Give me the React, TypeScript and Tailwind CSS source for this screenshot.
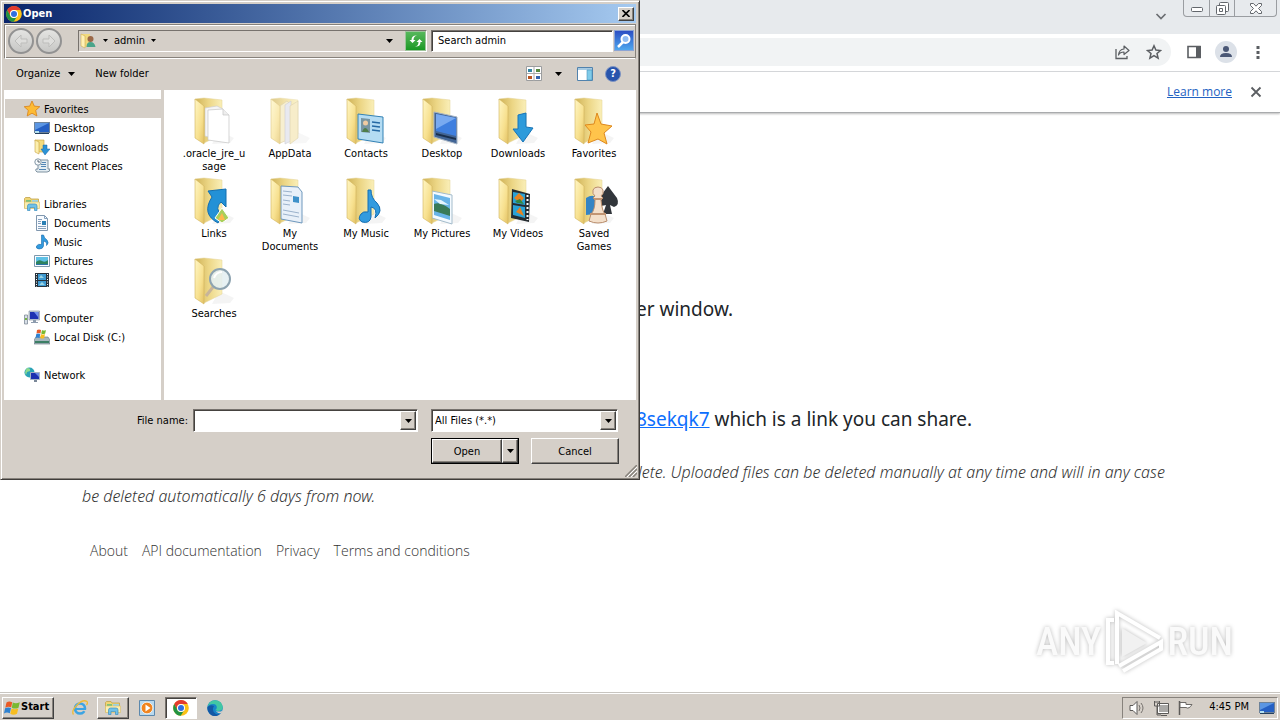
import type { ReactNode } from "react"

const raised = "border border-t-white border-l-white border-r-[#404040] border-b-[#404040] shadow-[inset_-1px_-1px_0_#87827c] bg-[#d5cfc8]"
const sunken = "border border-t-[#77726d] border-l-[#77726d] border-r-white border-b-white shadow-[inset_1px_1px_0_#45423f]"

function Svg({ size = 16, children }: { size?: number; children: ReactNode }) {
  return (
    <svg width={size} height={size} viewBox={`0 0 ${size} ${size}`} className="shrink-0" aria-hidden="true">
      {children}
    </svg>
  )
}

function Arrow() {
  return (
    <svg width="7" height="4" viewBox="0 0 7 4" className="shrink-0" aria-hidden="true">
      <path d="M0 0h7L3.5 4z" fill="#000" />
    </svg>
  )
}

function SmallArrow() {
  return (
    <svg width="5" height="3" viewBox="0 0 5 3" className="shrink-0" aria-hidden="true">
      <path d="M0 0h5L2.5 3z" fill="#000" />
    </svg>
  )
}

function ChromeLogo() {
  return (
    <Svg>
      <circle cx="8" cy="8" r="7.8" fill="#fbc116" />
      <path d="M1.2 4.1A7.8 7.8 0 0 1 14.8 4.1H8A4 4 0 0 0 4.5 10z" fill="#e33b2e" />
      <path d="M1.2 4.1A7.8 7.8 0 0 0 7.7 15.8L11.4 10A4 4 0 0 1 4.5 10z" fill="#229342" />
      <circle cx="8" cy="8" r="4" fill="#fff" />
      <circle cx="8" cy="8" r="3" fill="#2f6fe0" />
    </Svg>
  )
}

function WindowsFlag() {
  return (
    <Svg>
      <path d="M2.5 2.6Q5 .8 8.200 2.3L7.200 7.300Q4.300 6 1.3 7.7z" fill="#ea5a25" />
      <path d="M8.800 2.600Q12 4.200 15.800 2.2L14.500 7.700Q11 9.400 7.800 7.700z" fill="#79b931" />
      <path d="M1.1 8.300Q4 6.700 7 8L5.800 13.200Q2.800 11.600 0 13.400z" fill="#2f82d1" />
      <path d="M7.600 8.400Q10.800 10 14.300 8.400L13 13.800Q9.400 15.600 6.300 13.700z" fill="#f7bd20" />
    </Svg>
  )
}

function MonitorArt() {
  return (
    <>
      <rect x=".5" y="2.5" width="15" height="10" fill="#2560c4" stroke="#6d8299" />
      <path d="M1 3h14L1 10z" fill="#5b96e3" />
      <path d="M1 13h14v1H1z" fill="#24405f" />
      <path d="M1 11h4v2H1z" fill="#b3e0f0" />
    </>
  )
}

function LibraryArt() {
  return (
    <>
      <path d="M.5 2.500l1-1H6l1 1.500h7.500V12H.5z" fill="#efd573" stroke="#c2a24a" strokeWidth=".8" />
      <path d="M2 4h5v3H2z" fill="#7fc27a" />
      <path d="M8 4h6v3H8z" fill="#9bd3e6" />
      <path d="M.5 6h15v6.500H.5z" fill="#fbeeb0" stroke="#d6bd69" strokeWidth=".6" />
      <path d="M3.500 14.500V10q0-2 2-2h5.500q2 0 2 2v4.500h-2.500V11.500H6v3z" fill="#6fc1e8" stroke="#3c8fc0" strokeWidth=".7" />
    </>
  )
}

const note = "M7.5 1L9.5 1Q10 4 13 6Q15.5 9 12.5 11.5Q13.5 8 9.5 7V12Q9 15 5 15Q1.5 14.5 2.5 12Q4 9.5 7.5 10.5z"

const treeArt: Record<string, ReactNode> = {
  Favorites: <path d="M8 0l2.3 5.1 5.5.6-4.1 3.7 1.2 5.6L8 12.2 3.2 15l1.1-5.6L.2 5.7l5.5-.6z" fill="#fdbb35" stroke="#d8811a" strokeWidth=".8" />,
  Desktop: <MonitorArt />,
  Downloads: (
    <>
      <path d="M1 1h9v12H4z" fill="#f4dc7e" stroke="#c7a140" strokeWidth=".6" />
      <path d="M1 1l4 2v12l-4-2z" fill="#fcefae" stroke="#c7a140" strokeWidth=".6" />
      <path d="M9 6h4v4h3l-5 6-4-6h2z" fill="#2b93d6" stroke="#1b65a7" strokeWidth=".5" />
    </>
  ),
  "Recent Places": (
    <>
      <path d="M4 2h10v9h2q0 3-3 3H3q-2-1-1-3h2z" fill="#e4edf2" stroke="#7f91a0" />
      <path d="M8 4.5h4M7 6.5h5M7 8.5h5M5 11.5h7" stroke="#5386b4" />
      <circle cx="4" cy="4" r="3.2" fill="#f7fafc" stroke="#8296a5" />
      <path d="M4 2v2h2" fill="none" stroke="#345" strokeWidth=".8" />
    </>
  ),
  Libraries: <LibraryArt />,
  Documents: (
    <>
      <path d="M2.5.5h8l3 3v12h-11z" fill="#f8fbff" stroke="#8097ae" />
      <path d="M10.5.5v3h3M4 4.5h4M4 6.5h3M4 8.5h3M4 11.5h8M4 13.5h8" fill="none" stroke="#85a0bd" />
      <path d="M8 6h4v4H8z" fill="#297fb5" />
    </>
  ),
  Music: <path d={note} fill="#329bdf" stroke="#1969aa" strokeWidth=".6" />,
  Pictures: (
    <>
      <path d="M.5 2.5h15v11H.5z" fill="#fafcff" stroke="#7d98ad" />
      <path d="M2 4h12v8H2z" fill="#5ec1e6" />
      <path d="M2 9q3-3 6-1t6-1v5H2z" fill="#2e8360" />
      <path d="M2 11h12v1H2z" fill="#2c73a8" />
    </>
  ),
  Videos: (
    <>
      <path d="M1 1h14v14H1z" fill="#27333d" />
      <path d="M4 2h8v6H4zM4 9h8v5H4z" fill="#3f9bd3" />
      <path d="M5 6l2-3 3 3zM5 13l3-3 3 3z" fill="#9bd6e5" />
      <path d="M2.5 2v13M13.5 2v13" stroke="#fff" strokeDasharray="1 1.5" />
    </>
  ),
  Computer: (
    <>
      <path d="M5 1h10.5v9H5z" fill="#c5d1df" stroke="#7a8798" strokeWidth=".6" />
      <path d="M6 2h8.5v7H6z" fill="#1e31b2" />
      <path d="M10 2h4v5z" fill="#7290ec" />
      <path d="M9 10h3v2h2v1H7v-1h2z" fill="#8e9cae" />
      <path d="M.5 5h3v9h-3z" fill="#d8dfe7" stroke="#72808e" strokeWidth=".7" />
      <path d="M1 8h2v2H1z" fill="#75b445" />
    </>
  ),
  "Local Disk (C:)": (
    <>
      <path d="M0 11l2-3h12l2 3v4H0z" fill="#a6b6bd" stroke="#62737e" strokeWidth=".6" />
      <path d="M1 12h14v2H1z" fill="#3c7f65" />
      <path d="M3 1q2-1 4 0L6.5 4.5q-2-1-4 0z" fill="#e85c28" />
      <path d="M8 1q2 1 4 0l-.8 3.500q-2 1-4 0z" fill="#79b931" />
      <path d="M2.3 5q2-1 4 0L5.5 9q-2-1-4 0z" fill="#2f82d1" />
      <path d="M7 5q2 1 4 0l-.8 4q-2 1-4 0z" fill="#f7bd20" />
    </>
  ),
  Network: (
    <>
      <circle cx="5.5" cy="5.5" r="5" fill="#2aa3b7" />
      <path d="M3 1q4 0 3 3L3 5l-1 3Q0 5 3 1z" fill="#8ddb8e" />
      <path d="M6.5 5.5h9v7h-9z" fill="#1c2fb0" stroke="#a6b2c4" />
      <path d="M11 6h4v4z" fill="#6c87e4" />
      <path d="M10 13h3v2h-3z" fill="#7b8899" />
    </>
  ),
}

const treeGroups = [
  { name: "Favorites", items: ["Desktop", "Downloads", "Recent Places"] },
  { name: "Libraries", items: ["Documents", "Music", "Pictures", "Videos"] },
  { name: "Computer", items: ["Local Disk (C:)"] },
  { name: "Network", items: [] },
]

const folders: { label: string; art: ReactNode }[] = [
  {
    label: ".oracle_jre_usage",
    art: (
      <>
        <path d="M15 12l12-2 6 3v31l-8-1-10-3z" fill="#f5f5f5" stroke="#cfcfcf" strokeWidth=".7" />
        <path d="M18 14l15-1 6 6v28l-21-3z" fill="#fff" stroke="#c4c4c4" strokeWidth=".7" />
        <path d="M33 13v6h6" fill="#eee" stroke="#c4c4c4" strokeWidth=".7" />
      </>
    ),
  },
  {
    label: "AppData",
    art: (
      <>
        <path d="M14 10l7-5 3 3v35l-10 4z" fill="#f5e9bd" stroke="#cfc08e" strokeWidth=".6" />
        <path d="M19 9l6-4v40l-6 3z" fill="#dfe1ea" stroke="#b9b9c4" strokeWidth=".6" />
        <path d="M24 10l8-5v37l-8 6z" fill="#f4e6b4" stroke="#cfc08e" strokeWidth=".6" />
      </>
    ),
  },
  {
    label: "Contacts",
    art: (
      <>
        <path d="M16 18l25 3v26l-25-4z" fill="#b4dcf3" stroke="#3382b5" />
        <path d="M19 22l9 1v14l-9-1z" fill="#7795a2" />
        <circle cx="23.5" cy="27" r="2.5" fill="#f1cba2" />
        <path d="M20 36q3-8 7 0z" fill="#4f7d4a" />
        <path d="M30 26l8 1M30 30l8 1M30 34l8 1" stroke="#2569a4" strokeWidth="1.5" />
      </>
    ),
  },
  {
    label: "Desktop",
    art: (
      <>
        <path d="M16 16l23 5v27l-23-7z" fill="#426596" stroke="#a4b3c4" />
        <path d="M18 18l20 4v18l-20-5z" fill="#3f7fdf" />
        <path d="M18 18l20 4-20 11z" fill="#79aaf0" />
        <path d="M18 37l20 5v2l-20-5z" fill="#192f4d" />
      </>
    ),
  },
  { label: "Downloads", art: <path d="M24 19l8-2v14l7 1-10 14-10-13h5z" fill="#2d9bdb" stroke="#1874b7" /> },
  { label: "Favorites", art: <path d="M27 17l4 11 11 2-8 7 3 11-9-5-10 4 3-11-6-7 9-1z" fill="#ffc44b" stroke="#de881d" /> },
  {
    label: "Links",
    art: (
      <>
        <path d="M18 15l18-2v18l-5-5q-7 6 1 14l-4 7q-17-9-6-26z" fill="#2391d6" stroke="#146eaf" />
        <path d="M25 42l7-10 7 10-7 5z" fill="#a9cf5b" stroke="#fff" />
        <path d="M28 44l4-7 3 7z" fill="#ffb74e" />
      </>
    ),
  },
  {
    label: "My Documents",
    art: (
      <>
        <path d="M15 10l17 1 4 5v31l-21-4z" fill="#e8f0f9" stroke="#6e98bd" />
        <path d="M17 15l9 1M17 19l9 1M17 24l7 1M17 28l7 1M17 34l16 3M17 38l16 3" stroke="#9bb2cc" />
        <path d="M27 20l6 1v6l-6-1z" fill="#3f91c9" />
      </>
    ),
  },
  { label: "My Music", art: <path d="M26 14h3q0 8 6 13 7 8-2 15 3-10-4-11v10q-1 7-9 5-5-3-1-8 2-3 7-2z" fill="#329bdf" stroke="#146eb1" /> },
  {
    label: "My Pictures",
    art: (
      <>
        <path d="M14 15l20 4v29l-20-6z" fill="#f4faff" stroke="#a4bccb" />
        <path d="M16 18l16 4v22l-16-5z" fill="#69b4e8" />
        <path d="M16 28q6-3 16 5v7l-16-5z" fill="#397a58" />
        <path d="M16 23l7 1 8 5-9-1z" fill="#e4f5ff" />
      </>
    ),
  },
  {
    label: "My Videos",
    art: (
      <>
        <path d="M18 13l18 5-1 28-18-4z" fill="#252c30" />
        <path d="M19 16l12 2v11l-12-2zM19 29l12 2v11l-12-3z" fill="#2aa2d5" />
        <path d="M20 22l5-5 5 5-4 5zM22 36l4-5 4 9z" fill="#e7831f" />
        <path d="M21 25l5-2 4 5-7-1z" fill="#358543" />
        <path d="M33.5 19v25" stroke="#fff" strokeWidth="2" strokeDasharray="2 2" />
      </>
    ),
  },
  {
    label: "Saved Games",
    art: (
      <>
        <path d="M16 22q8-5 10 1l-1 15-9 1z" fill="#3484c4" />
        <path d="M38 10Q44 18 47 22Q50 29 44 31L40 29 42 38H33L36 29Q27 32 28 24Q32 18 38 10z" fill="#32363b" />
        <path d="M25 20q-3-2-2-6 1-3 5-3t5 3q1 4-2 6l2 2-2 2q1 11 4 14l2 7q-9 4-18 0l2-7q4-4 4-14l-2-2z" fill="#f3dfca" stroke="#b98d6c" />
        <path d="M20 38h16M24 23h8" stroke="#c29573" strokeWidth="2" />
      </>
    ),
  },
  {
    label: "Searches",
    art: (
      <>
        <path d="M23 31l-7 9" stroke="#c7b49a" strokeWidth="3" />
        <circle cx="30" cy="23" r="10" fill="#e4eff1" fillOpacity=".88" stroke="#8da3b0" strokeWidth="2" />
        <path d="M24 22q2-6 8-6" fill="none" stroke="#fff" strokeWidth="2" />
      </>
    ),
  },
]

function FolderIcon({ faded, children }: { faded: boolean; children: ReactNode }) {
  return (
    <svg width="48" height="48" viewBox="0 0 48 48" className="overflow-visible" opacity={faded ? 0.7 : 1} aria-hidden="true">
      <defs>
        <linearGradient id="flap" x1="0" y1="0" x2="1" y2="1">
          <stop stopColor="#fff6c4" />
          <stop offset=".6" stopColor="#f7e08e" />
          <stop offset="1" stopColor="#e2c163" />
        </linearGradient>
        <linearGradient id="back" x1="0" y1="0" x2="1" y2="0">
          <stop stopColor="#cfb257" />
          <stop offset=".5" stopColor="#ecd685" />
          <stop offset="1" stopColor="#faefb8" />
        </linearGradient>
      </defs>
      <path d="M29 35l15 7-4 5-18 1z" fill="#777" opacity=".08" />
      <path d="M5 3l9-1 18 2v34l-18 9z" fill="url(#back)" stroke="#e3d193" strokeWidth=".5" />
      {children}
      <path d="M5 3l9 7v38l-9-6z" fill="url(#flap)" stroke="#d2b45c" strokeWidth=".6" />
    </svg>
  )
}

function OpenDialog() {
  return (
    <section
      aria-label="Open"
      className="absolute top-0 left-0 z-10 w-[640px] border border-t-[#d5cfc8] border-l-[#d5cfc8] border-r-[#403d3a] border-b-[#403d3a] bg-[#d5cfc8] p-[3px] text-[11px] leading-[13px] text-black shadow-[inset_1px_1px_0_#fff,inset_-1px_-1px_0_#87827c]"
    >
      <header className="flex h-[19px] items-center gap-px bg-linear-to-r from-[#0a246a] to-[#a6caf0] px-0.5">
        <ChromeLogo />
        <h1 className="flex-1 font-bold text-white">Open</h1>
        <button aria-label="Close" className={`flex h-[14px] w-4 items-center justify-center ${raised}`}>
          <svg width="8" height="7" viewBox="0 0 8 7"><path d="M.5 0l7 7M7.5 0l-7 7" stroke="#000" strokeWidth="1.600" /></svg>
        </button>
      </header>

      {/* Address row */}
      <div className="mt-px flex h-[35px] items-center border border-[#87827c] border-b-white pr-px pb-0.5 pl-[3px] shadow-[inset_1px_1px_0_#fff,inset_0_-1px_0_#87827c]">
        {["Back", "Forward"].map((name) => (
          <button key={name} aria-label={name} className="mr-0.5 flex size-[26px] items-center justify-center rounded-full border-2 border-[#929292] bg-linear-to-b from-[#e4e4e2] to-[#c7c7c5]">
            <svg width="16" height="14" viewBox="0 0 16 14">
              <path d={name === "Back" ? "M8 1L2 7l6 6v-4h6V5H8z" : "M8 1l6 6-6 6V9H2V5h6z"} fill="#dededc" stroke="#bdbdbb" />
            </svg>
          </button>
        ))}
        <div className="ml-3.5 flex h-[22px] flex-1 items-center border border-t-[#77726d] border-l-[#77726d] border-r-white border-b-white pl-px">
          <Svg>
            <path d="M1 1h9v13H4z" fill="#f1d97e" />
            <path d="M1 1l4 2v12l-4-2z" fill="#fff1b5" stroke="#c7a140" strokeWidth=".5" />
            <circle cx="10.5" cy="6" r="3" fill="#9b6848" />
            <path d="M6.5 14q0-5 4-5t5 5z" fill="#4aa58a" />
          </Svg>
          <span className="ml-[7px]"><SmallArrow /></span>
          <span className="ml-1.5">admin</span>
          <span className="ml-1.5"><SmallArrow /></span>
          <button aria-label="Previous locations" className="mr-3 ml-auto"><Arrow /></button>
          <button aria-label="Refresh" className="flex h-5 w-[21px] items-center justify-center border border-[#9cc49a] bg-linear-to-b from-[#55b85b] to-[#179923]">
            <Svg>
              <path d="M9 2.500Q5.500 3 5.500 7H7.500L4.500 10 1.500 7h2q0-5 5.500-4.500z" fill="#fff" />
              <path d="M7 13.500q3.500-.5 3.500-4.500h-2l3-3 3 3h-2q0 5-5.500 4.500z" fill="#fff" />
            </Svg>
          </button>
        </div>
        <input aria-label="Search admin" defaultValue="Search admin" className={`ml-1 h-[22px] w-[182px] bg-white pl-1.5 ${sunken}`} />
        <button aria-label="Search" className="ml-px flex h-[21px] w-5 items-center justify-center border border-[#8ca4d4] bg-linear-to-b from-[#2d4ec3] to-[#50a7ee]">
          <Svg>
            <circle cx="9.5" cy="6" r="4" fill="#91bdf3" stroke="#fff" strokeWidth="2" />
            <path d="M7 9l-5 5" stroke="#fff" strokeWidth="2.5" />
          </Svg>
        </button>
      </div>

      {/* Command bar */}
      <div className="flex h-[31px] items-center pr-[15px] pb-0.5 pl-3">
        <button className="flex items-center gap-2">Organize <Arrow /></button>
        <button className="ml-5">New folder</button>
        <button aria-label="Change view" className="ml-auto">
          <Svg>
            <path d="M.5.5h15v14H.5z" fill="#fff" stroke="#9b9d9f" />
            <path d="M8 1v14M1 7.5h14" stroke="#aaa" />
            <path d="M2 3h4v3H2z" fill="#3586a4" />
            <path d="M10 3h4v3h-4z" fill="#568a42" />
            <path d="M2 10h4v3H2z" fill="#ba521f" />
            <path d="M10 10h4v3h-4z" fill="#3061ad" />
          </Svg>
        </button>
        <button aria-label="More views" className="ml-[13px]"><Arrow /></button>
        <button aria-label="Preview pane" className="ml-[15px]">
          <Svg>
            <path d="M.5 1.5h15v13H.5z" fill="#fff" stroke="#5182ad" />
            <path d="M1 2h14v2H1z" fill="#a7cae2" />
            <path d="M10 4h5v10h-5z" fill="#7fcbe9" stroke="#4a94bd" strokeWidth=".6" />
          </Svg>
        </button>
        <button aria-label="Help" className="ml-3 flex size-4 items-center justify-center rounded-full border border-[#7f95c3] bg-[#2854ac] font-bold text-white">?</button>
      </div>

      <div className="flex h-[310px] bg-white">
        <nav className="w-[160px] border-r-[3px] border-[#d5cfc8] pt-[9px] pl-px">
          {treeGroups.map((group) => (
            <ul key={group.name} className="mb-[19px]">
              <li className={`flex h-[19px] items-center gap-1 pt-px pl-[19px] ${group.name === "Favorites" ? "bg-[#d5cfc8]" : ""}`}>
                <Svg>{treeArt[group.name]}</Svg>
                {group.name}
              </li>
              {group.items.map((item) => (
                <li key={item} className="flex h-[19px] items-center gap-1 pt-px pl-[29px]">
                  <Svg>{treeArt[item]}</Svg>
                  {item}
                </li>
              ))}
            </ul>
          ))}
        </nav>
        <ul className="grid flex-1 auto-rows-[80px] grid-cols-[repeat(6,76px)] pt-1.5 pl-3">
          {folders.map((folder) => (
            <li key={folder.label} className="flex flex-col items-center gap-[3px] text-center">
              <FolderIcon faded={folder.label === "AppData"}>{folder.art}</FolderIcon>
              <span className="w-[68px] px-0.5 break-words">{folder.label}</span>
            </li>
          ))}
        </ul>
      </div>

      <form className="flex flex-col gap-1.5 px-[17px] pt-[9px] pb-3" onSubmit={(e) => e.preventDefault()}>
        <div className="flex items-center justify-end pr-px">
          <label htmlFor="file-name" className="mr-[5px]">File name:</label>
          <div className={`flex h-[23px] w-[225px] bg-white p-px ${sunken}`}>
            <input id="file-name" className="min-w-0 flex-1 pl-1 outline-none" />
            <button type="button" aria-label="Recent file names" className={`flex w-4 items-center justify-center ${raised}`}><Arrow /></button>
          </div>
          <div className={`relative ml-[13px] h-[23px] w-[187px] bg-white ${sunken}`}>
            <select aria-label="File type" className="size-full appearance-none pl-[3px]">
              <option>All Files (*.*)</option>
            </select>
            <span className={`pointer-events-none absolute inset-y-px right-px flex w-4 items-center justify-center ${raised}`}><Arrow /></span>
          </div>
        </div>
        <div className="flex justify-end gap-3">
          <div className="flex h-[26px] w-[88px] border border-black">
            <button className={`flex-1 ${raised}`}>Open</button>
            <button type="button" aria-label="Open options" className={`flex w-4 items-center justify-center ${raised}`}><Arrow /></button>
          </div>
          <button type="button" className={`h-[26px] w-[88px] ${raised}`}>Cancel</button>
        </div>
      </form>
      <svg width="12" height="12" viewBox="0 0 12 12" className="absolute right-0.5 bottom-0.5" aria-hidden="true">
        <path d="M0 12L12 0M4 12l8-8M8 12l4-4" stroke="#87827c" strokeWidth="1.500" />
        <path d="M2 12L12 2M6 12l6-6" stroke="#fff" />
      </svg>
    </section>
  )
}

function BrowserChrome() {
  return (
    <header>
      <div className="flex h-[34px] items-start justify-end bg-[#e7eaed] pr-[3px]">
        <button aria-label="Search tabs" className="mt-[13px] mr-4">
          <svg width="12" height="7" viewBox="0 0 12 7"><path d="M1.5 1L6 5.5 10.5 1" fill="none" stroke="#6b6e72" strokeWidth="1.700" /></svg>
        </button>
        <div className="flex h-[17px] rounded-b border border-t-0 border-[#9a9da1]">
          <button aria-label="Minimize" className="flex w-[25px] items-center justify-center pt-0.5">
            <svg width="12" height="6" viewBox="0 0 12 6"><rect x=".5" y="1.5" width="11" height="4" rx="1" fill="#fff" stroke="#63676c" /></svg>
          </button>
          <button aria-label="Restore" className="flex w-[26px] items-center justify-center border-x border-[#9a9da1]">
            <svg width="13" height="13" viewBox="0 0 13 13" fill="#fff" stroke="#63676c"><rect x="3.5" y=".5" width="9" height="9" rx="1" /><rect x=".5" y="3.5" width="9" height="9" rx="1" /><path d="M3.5 6.5h3v3h-3z" /></svg>
          </button>
          <button aria-label="Close window" className="flex w-[41px] items-center justify-center">
            <svg width="12" height="11" viewBox="0 0 12 11"><path d="M.5.5h3L6 3.2 8.5.5h3v2L8.500 5.500l3 3v2h-3L6 7.800 3.500 10.500h-3v-2l3-3-3-3z" fill="#fff" stroke="#63676c" /></svg>
          </button>
        </div>
      </div>
      <div className="flex h-[38px] items-center border-b border-[#d7d9dc] bg-white pr-3.5 pb-px">
        <div className="flex h-[28px] flex-1 items-center justify-end gap-4 rounded-r-full bg-[#f1f3f4] pr-[9px]">
          <button aria-label="Share this page">
            <Svg>
              <path d="M2 5v9.500h11V12" fill="none" stroke="#5b5e62" strokeWidth="1.300" />
              <path d="M10 2l5 4.500-5 4V8Q6 8 4.500 11 5 5.500 10 5z" fill="none" stroke="#5b5e62" strokeWidth="1.200" strokeLinejoin="round" />
            </Svg>
          </button>
          <button aria-label="Bookmark this tab">
            <Svg><path d="M8 1.800l1.900 4.300 4.600.4-3.500 3 1.100 4.600L8 11.700l-4.100 2.400L5 9.500l-3.500-3 4.600-.4z" fill="none" stroke="#5b5e62" strokeWidth="1.500" /></Svg>
          </button>
        </div>
        <button aria-label="Side panel" className="ml-[15px]">
          <Svg><path d="M2 2.500h12v11H2z" fill="none" stroke="#5b5e62" strokeWidth="1.600" /><path d="M10 2h5v12h-5z" fill="#5b5e62" /></Svg>
        </button>
        <button aria-label="Profile" className="ml-[13px] flex size-[22px] items-center justify-center rounded-full bg-[#dce1e8]">
          <Svg><circle cx="8" cy="5" r="3" fill="#4a5775" /><path d="M2 13q0-4 6-4t6 4z" fill="#4a5775" /></Svg>
        </button>
        <button aria-label="Chrome menu" className="ml-[13px]">
          <Svg><path d="M6.500 2h3v3h-3zM6.500 7h3v3h-3zM6.500 12h3v3h-3z" fill="#5b5e62" /></Svg>
        </button>
      </div>
      <div className="flex h-[41px] items-center justify-end border-b border-[#a9abad] bg-white pr-[18px] font-['Open_Sans',sans-serif] text-xs shadow-[0_1px_2px_#bbb]">
        <a href="#" className="text-[#2262c2] underline">Learn more</a>
        <button aria-label="Dismiss" className="ml-[18px]">
          <svg width="12" height="12" viewBox="0 0 12 12"><path d="M1.5 1.5l9 9M10.5 1.5l-9 9" stroke="#5b5e62" strokeWidth="1.800" /></svg>
        </button>
      </div>
    </header>
  )
}

function Page() {
  return (
    <main className="flex-1 px-[82px] pt-[181px] font-['Noto_Sans',sans-serif] text-[#212529]">
      <div className="pl-[554px] text-[19px] leading-[30px] whitespace-nowrap">
        <p>er window.</p>
        <p className="mt-20"><a href="#" className="text-[#0d6efd] underline">8sekqk7</a> which is a link you can share.</p>
      </div>
      <p className="mt-[26px] text-base leading-6 font-light whitespace-nowrap text-[#333] italic">
        <span className="block pl-[556px]">lete. Uploaded files can be deleted manually at any time and will in any case</span>
        be deleted automatically 6 days from now.
      </p>
      <footer className="mt-[31px] flex gap-3.5 pl-2 font-['Open_Sans',sans-serif] text-sm leading-6 font-light text-[#333]">
        <a href="#">About</a>
        <a href="#">API documentation</a>
        <a href="#">Privacy</a>
        <a href="#">Terms and conditions</a>
      </footer>
    </main>
  )
}

function Watermark() {
  return (
    <div className="pointer-events-none absolute right-[47px] bottom-[46px] flex items-center gap-1 font-['Roboto_Condensed','Liberation_Sans_Narrow',sans-serif] text-[38px] leading-none font-medium text-[#fafafa] drop-shadow-[0_0_2px_#bbb]">
      <span>ANY</span>
      <svg width="58" height="64" viewBox="0 0 58 64" aria-hidden="true">
        <path d="M17 18v29l25-14z" fill="#f1f1f1" />
        <path d="M9 53H3V10h6M12 47V3l43 25M12 3v51M18 61l38-22v-7L14 56" fill="none" stroke="#fff" strokeWidth="4" />
      </svg>
      <span>RUN</span>
    </div>
  )
}

function Taskbar() {
  return (
    <footer className="relative flex h-7 items-center border-t border-[#c8c5c0] bg-[#d5cfc8] px-0.5 pt-0.5 text-[11px] text-black shadow-[inset_0_1px_0_#fff]">
      <button className={`flex h-[22px] w-[52px] items-center gap-px pl-px font-bold ${raised}`}>
        <WindowsFlag />
        Start
      </button>
      <button aria-label="Internet Explorer" className="ml-[18px]">
        <Svg>
          <circle cx="8" cy="8.500" r="5" fill="none" stroke="#3ca4e3" strokeWidth="2.600" />
          <path d="M9 10h6v2.500L12 11z" fill="#d5cfc8" />
          <path d="M4 9h10" stroke="#3ca4e3" strokeWidth="2" />
          <path d="M1.500 14.500Q-1 11 5 5T15 1.500Q16 3 14.500 5" fill="none" stroke="#efbb36" strokeWidth="1.300" />
        </Svg>
      </button>
      <button aria-label="File Explorer" className={`ml-[9px] flex h-[22px] w-8 items-center justify-center ${raised}`}>
        <Svg><LibraryArt /></Svg>
      </button>
      <button aria-label="Media Player" className="ml-2.5">
        <Svg>
          <path d="M.5.5h15v15H.5z" fill="#b9d9ee" stroke="#5c88ad" />
          <circle cx="8" cy="8" r="5.800" fill="#f0841f" stroke="#fff" strokeWidth=".7" />
          <path d="M6.500 4.500l5 3.500-5 3.500z" fill="#fff" />
        </Svg>
      </button>
      <button aria-label="Google Chrome" className={`ml-2.5 flex h-[22px] w-8 items-center justify-center bg-white ${sunken}`}>
        <ChromeLogo />
      </button>
      <button aria-label="Microsoft Edge" className="ml-2.5">
        <Svg>
          <circle cx="8" cy="8" r="7.800" fill="#1784c9" />
          <path d="M.5 7Q2 0 8.500.2 15 1 15.800 7q0 4-5 4-3-.5-1-3Q10 4 6 4 2 4 .5 7z" fill="#42c7a4" />
          <path d="M.5 7Q3 4 7 6q-3 5 2 8 3 1 5-1-4 5-10 2-4-3-3.500-8z" fill="#1458a5" />
          <path d="M8 9q0 3 6 2.500l1.500-1.500-1 3q-5 1-6.500-4z" fill="#d5cfc8" />
        </Svg>
      </button>
      <div className="ml-auto flex h-[22px] items-center border border-t-[#87827c] border-l-[#87827c] border-r-white border-b-white pl-1.5">
        <div className="flex gap-2">
          <Svg>
            <path d="M1 5.500h3l4-4v13l-4-4H1z" fill="#fff" stroke="#5c5a58" />
            <path d="M10 5q2 3 0 6M12 3q4 5 0 10" fill="none" stroke="#75716d" />
          </Svg>
          <Svg>
            <path d="M5.500 4.500h10v8h-10z" fill="#aaa9a7" stroke="#fff" />
            <path d="M4.500 3.500h11v10h-11zM8 15.500h6M1.500 1v5h5V1M4 6v9h4M3 1v2M5 1v2" fill="none" stroke="#5c5a58" />
          </Svg>
          <Svg>
            <path d="M2.500 15V1" stroke="#5c5a58" strokeWidth="1.500" />
            <path d="M3 2.500h6v2h6q-3 5-6 3H3z" fill="#fff" stroke="#6d6a67" />
          </Svg>
        </div>
        <time className="ml-4">4:45 PM</time>
        <button aria-label="Show desktop" className="ml-2.5 mr-0.5"><Svg><MonitorArt /></Svg></button>
      </div>
    </footer>
  )
}

export default function App() {
  return (
    <div className="relative flex min-h-screen flex-col overflow-hidden bg-white font-['DejaVu_Sans_Condensed','Noto_Sans',sans-serif]">
      <BrowserChrome />
      <Page />
      <OpenDialog />
      <Watermark />
      <Taskbar />
    </div>
  )
}
